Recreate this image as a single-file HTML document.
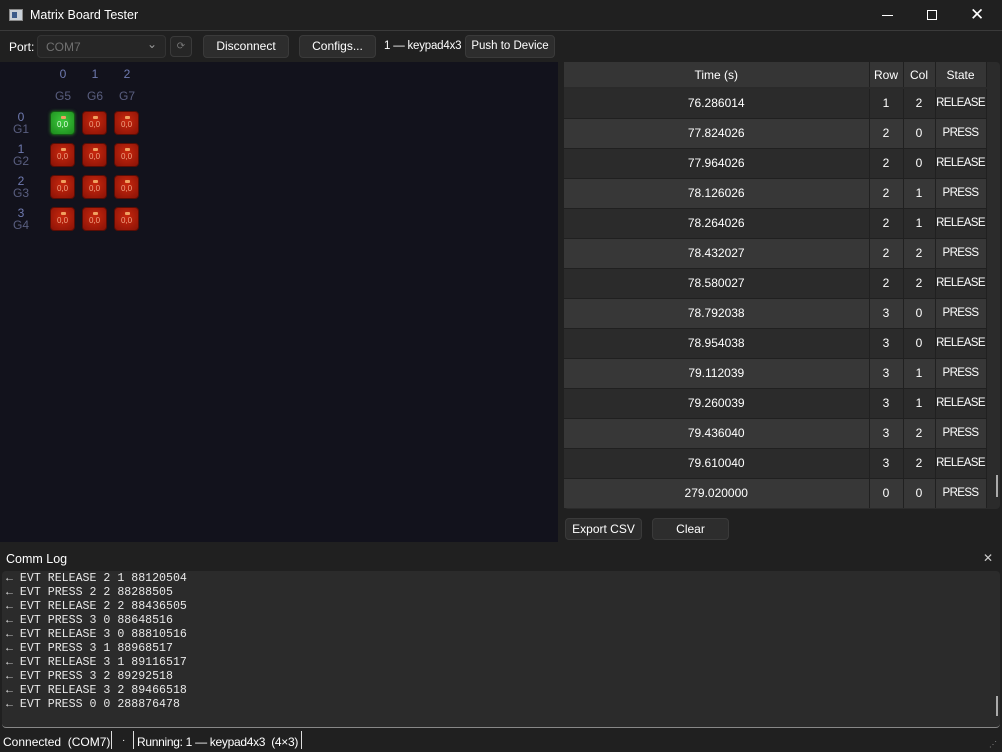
<!DOCTYPE html>
<html><head><meta charset="utf-8"><style>
*{box-sizing:border-box;margin:0;padding:0}
body{width:1002px;height:752px;background:#202020;font-family:"Liberation Sans",sans-serif;font-size:12px;color:#fff;position:relative;overflow:hidden}
.a{position:absolute}
.btn{position:absolute;background:#2d2d2d;border:1px solid #3a3a3a;border-radius:4px;color:#fff;text-align:center;font-size:12px}
.key{position:absolute;width:25px;height:24px;border-radius:4px;background:radial-gradient(circle at 50% 40%,#c8280e,#8a1206);border:1px solid #5a0d05;color:#f0a080;font-size:8px;text-align:center;line-height:26px}
.key:before{content:"";position:absolute;left:10px;top:4px;width:5px;height:3px;background:#f0a060;border-radius:1px}
.lbl{position:absolute;color:#6f7ab0;font-size:12px;text-align:center;width:20px}
.lbl2{position:absolute;color:#5a5f80;font-size:12px;text-align:center;width:20px}
table{border-collapse:collapse;position:absolute;left:564px;top:62px;width:422px;table-layout:fixed}
td,th{height:30px;text-align:center;font-size:12px;font-weight:normal;border-right:1px solid #202020;border-bottom:1px solid #202020;white-space:nowrap;overflow:hidden}
td:nth-child(4){font-size:11.5px;letter-spacing:-0.6px;padding:0}
th{height:26px;background:#353535;border-bottom:2px solid #2a2a2a}
tr:nth-child(odd) td{background:#373737}
tr:nth-child(even) td{background:#2b2b2b}
.log{font-family:"Liberation Mono",monospace;font-size:11.6px;line-height:14px;color:#e8e8e8;white-space:pre}
</style></head><body>
<div class="a" style="left:0;top:0;width:1002px;height:31px;background:#202020;border-bottom:1px solid #3a3a3a"></div>
<div class="a" style="left:9px;top:9px;width:14px;height:12px;background:#c8d0d8;border:1px solid #888"><div class="a" style="left:2px;top:2px;width:5px;height:6px;background:#3a5a8a"></div></div>
<div class="a" style="left:30px;top:8px;font-size:12.5px">Matrix Board Tester</div>
<div class="a" style="left:882px;top:15px;width:11px;height:1px;background:#fff"></div>
<div class="a" style="left:927px;top:10px;width:10px;height:10px;border:1px solid #fff"></div>
<div class="a" style="left:970px;top:5px;font-size:17px;color:#fff">✕</div>

<div class="a" style="left:9px;top:40px;font-size:12px">Port:</div>
<div class="btn" style="left:37px;top:35px;width:129px;height:23px;background:#262626;border-color:#333;text-align:left;padding:4px 8px;color:#707070">COM7<span class="a" style="right:8px;top:1px;color:#999">⌄</span></div>
<div class="btn" style="left:170px;top:36px;width:22px;height:21px;background:#262626;color:#777;font-size:10px;line-height:19px">⟳</div>
<div class="btn" style="left:203px;top:35px;width:86px;height:23px;line-height:21px">Disconnect</div>
<div class="btn" style="left:299px;top:35px;width:77px;height:23px;line-height:21px">Configs...</div>
<div class="a" style="left:384px;top:40px;font-size:11.5px;letter-spacing:-0.2px">1 — keypad4x3</div>
<div class="btn" style="left:465px;top:35px;width:90px;height:23px;line-height:21px;font-size:11.5px">Push to Device</div>

<div class="a" style="left:0;top:62px;width:558px;height:480px;background:#12121c"></div>
<div class="lbl" style="left:53px;top:67px">0</div><div class="lbl" style="left:85px;top:67px">1</div><div class="lbl" style="left:117px;top:67px">2</div>
<div class="lbl2" style="left:53px;top:89px">G5</div><div class="lbl2" style="left:85px;top:89px">G6</div><div class="lbl2" style="left:117px;top:89px">G7</div>
<div class="lbl" style="left:11px;top:111px;line-height:12px">0<br><span style="color:#5a5f80">G1</span></div>
<div class="lbl" style="left:11px;top:143px;line-height:12px">1<br><span style="color:#5a5f80">G2</span></div>
<div class="lbl" style="left:11px;top:175px;line-height:12px">2<br><span style="color:#5a5f80">G3</span></div>
<div class="lbl" style="left:11px;top:207px;line-height:12px">3<br><span style="color:#5a5f80">G4</span></div>
<div class="key" style="left:50px;top:111px;background:radial-gradient(circle at 50% 40%,#3cc83c,#1c8a1c);border-color:#145a14;color:#e0ffe0;box-shadow:0 0 3px #2a6a2a">0,0</div>
<div class="key" style="left:82px;top:111px">0,0</div><div class="key" style="left:114px;top:111px">0,0</div>
<div class="key" style="left:50px;top:143px">0,0</div><div class="key" style="left:82px;top:143px">0,0</div><div class="key" style="left:114px;top:143px">0,0</div>
<div class="key" style="left:50px;top:175px">0,0</div><div class="key" style="left:82px;top:175px">0,0</div><div class="key" style="left:114px;top:175px">0,0</div>
<div class="key" style="left:50px;top:207px">0,0</div><div class="key" style="left:82px;top:207px">0,0</div><div class="key" style="left:114px;top:207px">0,0</div>

<div class="a" style="left:564px;top:62px;width:436px;height:447px;background:#2b2b2b;border-radius:4px"></div>
<table>
<colgroup><col style="width:305px"><col style="width:34px"><col style="width:32px"><col style="width:51px"></colgroup>
<tr><th>Time (s)</th><th>Row</th><th>Col</th><th>State</th></tr>
<tr><td>76.286014</td><td>1</td><td>2</td><td>RELEASE</td></tr>
<tr><td>77.824026</td><td>2</td><td>0</td><td>PRESS</td></tr>
<tr><td>77.964026</td><td>2</td><td>0</td><td>RELEASE</td></tr>
<tr><td>78.126026</td><td>2</td><td>1</td><td>PRESS</td></tr>
<tr><td>78.264026</td><td>2</td><td>1</td><td>RELEASE</td></tr>
<tr><td>78.432027</td><td>2</td><td>2</td><td>PRESS</td></tr>
<tr><td>78.580027</td><td>2</td><td>2</td><td>RELEASE</td></tr>
<tr><td>78.792038</td><td>3</td><td>0</td><td>PRESS</td></tr>
<tr><td>78.954038</td><td>3</td><td>0</td><td>RELEASE</td></tr>
<tr><td>79.112039</td><td>3</td><td>1</td><td>PRESS</td></tr>
<tr><td>79.260039</td><td>3</td><td>1</td><td>RELEASE</td></tr>
<tr><td>79.436040</td><td>3</td><td>2</td><td>PRESS</td></tr>
<tr><td>79.610040</td><td>3</td><td>2</td><td>RELEASE</td></tr>
<tr><td style="border-bottom:none">279.020000</td><td style="border-bottom:none">0</td><td style="border-bottom:none">0</td><td style="border-bottom:none">PRESS</td></tr>
</table>
<div class="a" style="left:996px;top:475px;width:2px;height:22px;background:#aaa"></div>
<div class="btn" style="left:565px;top:518px;width:77px;height:22px;line-height:20px">Export CSV</div>
<div class="btn" style="left:652px;top:518px;width:77px;height:22px;line-height:20px">Clear</div>

<div class="a" style="left:6px;top:552px;font-size:12.5px">Comm Log</div>
<div class="a" style="left:983px;top:551px;font-size:12px;color:#ccc">✕</div>
<div class="a" style="left:2px;top:571px;width:998px;height:157px;background:#2b2b2b;border-radius:4px;border-bottom:1px solid #888"></div>
<div class="a log" style="left:6px;top:572px">← EVT RELEASE 2 1 88120504
← EVT PRESS 2 2 88288505
← EVT RELEASE 2 2 88436505
← EVT PRESS 3 0 88648516
← EVT RELEASE 3 0 88810516
← EVT PRESS 3 1 88968517
← EVT RELEASE 3 1 89116517
← EVT PRESS 3 2 89292518
← EVT RELEASE 3 2 89466518
← EVT PRESS 0 0 288876478</div>
<div class="a" style="left:996px;top:696px;width:2px;height:20px;background:#aaa"></div>

<div class="a" style="left:3px;top:735px;font-size:12px">Connected &nbsp;(COM7)</div>
<div class="a" style="left:111px;top:731px;width:1px;height:18px;background:#ddd"></div>
<div class="a" style="left:122px;top:735px;font-size:10px">·</div>
<div class="a" style="left:133px;top:731px;width:1px;height:18px;background:#ddd"></div>
<div class="a" style="left:137px;top:735px;font-size:12px;letter-spacing:-0.3px">Running: 1 — keypad4x3 &nbsp;(4×3)</div>
<div class="a" style="left:301px;top:731px;width:1px;height:18px;background:#ddd"></div>
<div class="a" style="left:989px;top:740px;font-size:8px;color:#888">⋰</div>
</body></html>
